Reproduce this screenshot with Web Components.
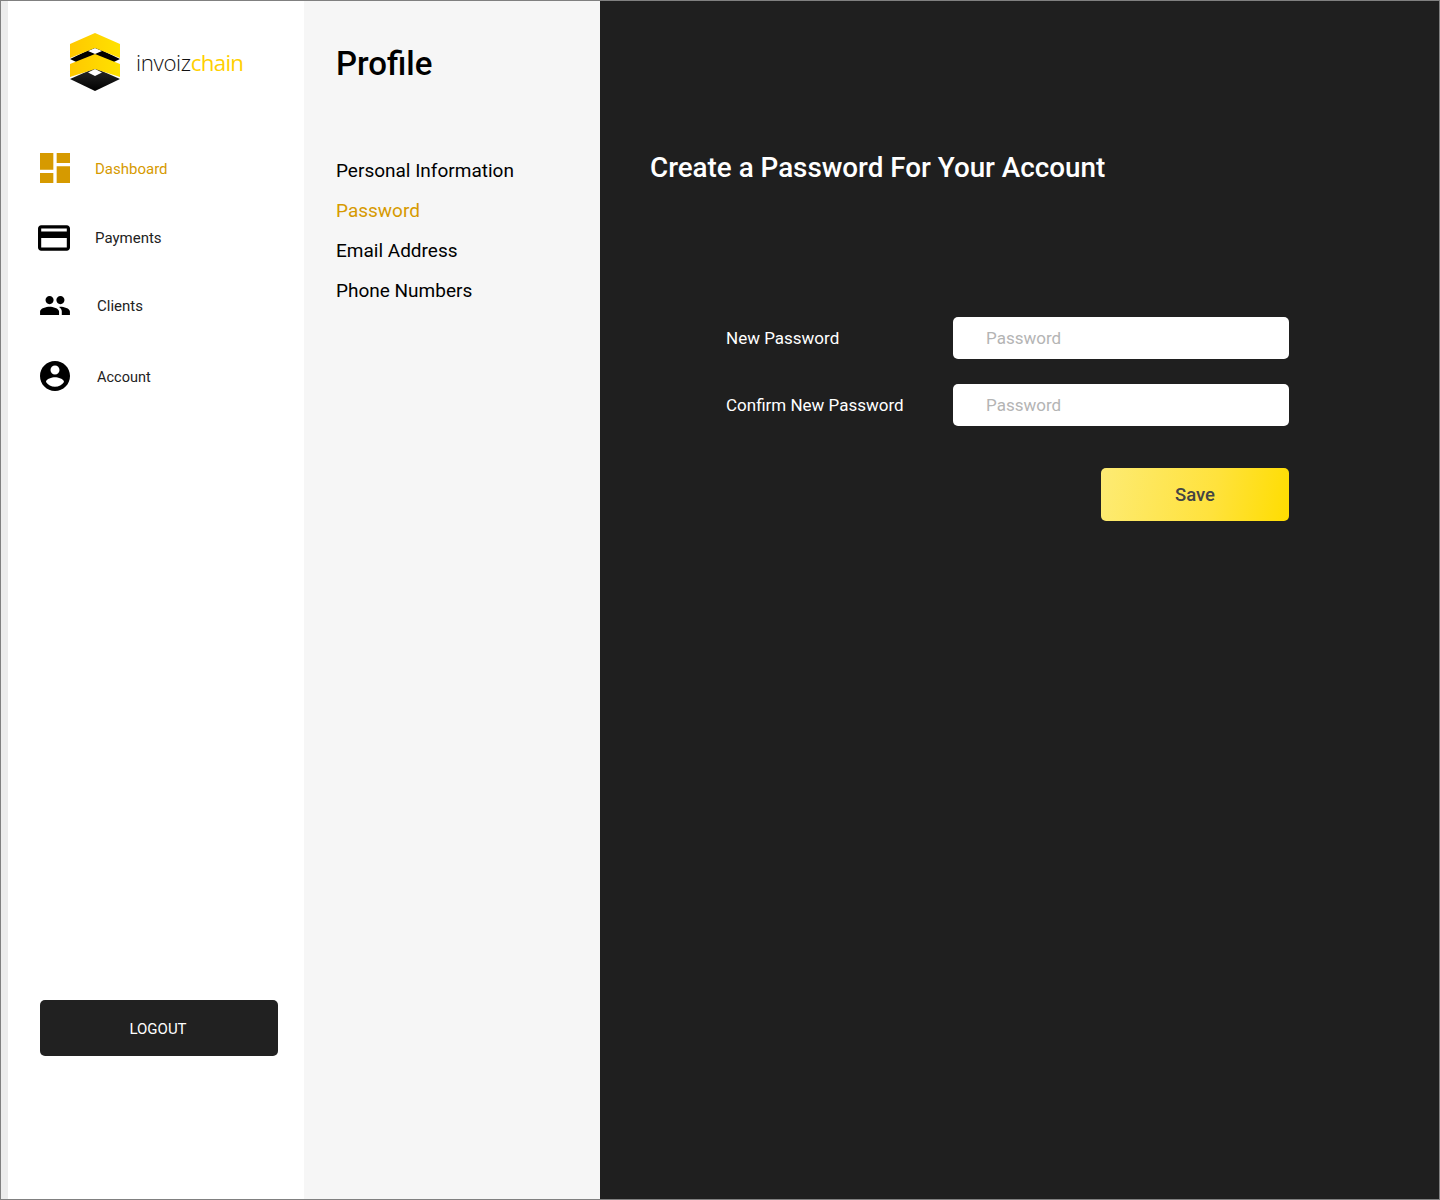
<!DOCTYPE html>
<html lang="en">
<head>
<meta charset="utf-8">
<title>Profile - invoizchain</title>
<style>
  html, body { margin: 0; padding: 0; }
  body { font-family: Roboto, "Liberation Sans", sans-serif; background: #1f1f1f; }
  .frame {
    box-sizing: border-box;
    width: 1440px;
    height: 1200px;
    border: 1px solid #808080;
    background: #ececec;
    display: grid;
    grid-template-columns: 7px 296px 296px 1fr;
    overflow: hidden;
  }
  .frame > :first-child { grid-column: 2; }
</style>
</head>
<body>
<div class="frame">
  <app-sidebar>
    <brand-logo slot="logo"></brand-logo>
    <nav-item active label="Dashboard" icon="dashboard" style="--row:68px;--label-top:2px"></nav-item>
    <nav-item label="Payments" icon="payments" style="--row:72px"></nav-item>
    <nav-item label="Clients" icon="clients" style="--row:63px;--label-gap:27px"></nav-item>
    <nav-item label="Account" icon="account" style="--row:78px;--label-gap:27px;--label-size:14.5px;--label-top:2px"></nav-item>
    <logout-button slot="footer">LOGOUT</logout-button>
  </app-sidebar>
  <profile-menu heading="Profile">
    <menu-link>Personal Information</menu-link>
    <menu-link active>Password</menu-link>
    <menu-link>Email Address</menu-link>
    <menu-link>Phone Numbers</menu-link>
  </profile-menu>
  <password-panel heading="Create a Password For Your Account">
    <form-field label="New Password" placeholder="Password"></form-field>
    <form-field label="Confirm New Password" placeholder="Password"></form-field>
    <save-button slot="actions">Save</save-button>
  </password-panel>
</div>

<script>
const icons = {
  dashboard: { box: '3 3 18 18', w: 30, h: 30, d: 'M3 13h8V3H3v10zm0 8h8v-6H3v6zm10 0h8V11h-8v10zm0-18v6h8V3h-8z' },
  payments: { box: '2 4 20 16', w: 32, h: 26, d: 'M20 4H4c-1.11 0-1.99.89-1.99 2L2 18c0 1.11.89 2 2 2h16c1.11 0 2-.89 2-2V6c0-1.11-.89-2-2-2zm0 14H4v-6h16v6zm0-10H4V6h16v2z' },
  clients: { box: '1 5 22 14', w: 30, h: 19, d: 'M16 11c1.66 0 2.99-1.34 2.99-3S17.66 5 16 5c-1.66 0-3 1.34-3 3s1.34 3 3 3zm-8 0c1.66 0 2.99-1.34 2.99-3S9.66 5 8 5C6.34 5 5 6.34 5 8s1.34 3 3 3zm0 2c-2.33 0-7 1.17-7 3.5V19h14v-2.5c0-2.33-4.67-3.5-7-3.5zm8 0c-.29 0-.62.02-.97.05 1.16.84 1.97 1.97 1.97 3.45V19h6v-2.5c0-2.33-4.67-3.5-7-3.5z' },
  account: { box: '2 2 20 20', w: 30, h: 30, d: 'M12 2C6.48 2 2 6.48 2 12s4.48 10 10 10 10-4.48 10-10S17.52 2 12 2zm0 3c1.66 0 3 1.34 3 3s-1.34 3-3 3-3-1.34-3-3 1.34-3 3-3zm0 14.2c-2.5 0-4.71-1.28-6-3.22.03-1.99 4-3.08 6-3.08 1.99 0 5.97 1.09 6 3.08-1.29 1.94-3.5 3.22-6 3.22z' }
};

class AppSidebar extends HTMLElement {
  constructor() {
    super();
    this.attachShadow({ mode: 'open' });
    this.shadowRoot.innerHTML = `
      <style>
        :host { display: flex; flex-direction: column; background: #fff; min-height: 0; }
        .logo { padding: 32px 0 0 62px; height: 133px; box-sizing: border-box; }
        nav { display: flex; flex-direction: column; }
        .footer { margin-top: auto; padding: 0 26px 143px 32px; }
      </style>
      <div class="logo"><slot name="logo"></slot></div>
      <nav><slot></slot></nav>
      <div class="footer"><slot name="footer"></slot></div>
    `;
  }
}
customElements.define('app-sidebar', AppSidebar);

class BrandLogo extends HTMLElement {
  constructor() {
    super();
    this.attachShadow({ mode: 'open' });
    this.shadowRoot.innerHTML = `
      <style>
        :host { display: flex; align-items: center; gap: 16px; }
        svg { display: block; flex: none; }
        .name { font: 300 22.3px "Open Sans", sans-serif; color: #111; letter-spacing: -0.35px; }
        .name b { font-weight: 400; color: #ffd000; letter-spacing: -0.7px; }
      </style>
      <svg width="50" height="59" viewBox="0 0 50 59">
        <defs>
          <linearGradient id="y" x1="0" x2="1" y1="0" y2="0">
            <stop offset="0" stop-color="#ffc800"/><stop offset="1" stop-color="#ffe200"/>
          </linearGradient>
          <linearGradient id="k" x1="0" x2="0" y1="0" y2="1">
            <stop offset="0" stop-color="#2a2a2a"/><stop offset="1" stop-color="#000"/>
          </linearGradient>
        </defs>
        <polygon points="25,14 50,26 25,38 0,26" fill="#000"/>
        <polygon points="25,15 32,18 25,21 18,18" fill="#fff"/>
        <polygon points="25,35 50,46 25,58 0,46" fill="url(#k)"/>
        <polygon points="25,36 32,39.5 25,43 18,39.5" fill="#fff"/>
        <polygon points="25,0 50,11 50,25 25,15 0,25 0,11" fill="url(#y)"/>
        <polygon points="25,21 50,31 50,44 25,36 0,44 0,31" fill="url(#y)"/>
      </svg>
      <span class="name">invoiz<b>chain</b></span>
    `;
  }
}
customElements.define('brand-logo', BrandLogo);

class NavItem extends HTMLElement {
  constructor() {
    super();
    this.attachShadow({ mode: 'open' });
  }
  connectedCallback() {
    const label = this.getAttribute('label') || '';
    const icon = icons[this.getAttribute('icon')];
    this.shadowRoot.innerHTML = `
      <style>
        :host { display: flex; align-items: center; height: var(--row, 68px); padding-left: 30px; color: #222; }
        :host([active]) { color: #d69a00; }
        .icon { width: 32px; display: flex; justify-content: flex-end; flex: none; }
        svg { display: block; fill: currentColor; }
        :host(:not([active])) svg { fill: #000; }
        .label { margin-left: var(--label-gap, 25px); padding-top: var(--label-top, 0); font: 400 var(--label-size, 15px) Roboto, sans-serif; }
      </style>
      <span class="icon"><svg width="${icon.w}" height="${icon.h}" viewBox="${icon.box}"><path d="${icon.d}"/></svg></span>
      <span class="label">${label}</span>
    `;
  }
}
customElements.define('nav-item', NavItem);

class LogoutButton extends HTMLElement {
  constructor() {
    super();
    this.attachShadow({ mode: 'open' });
    this.shadowRoot.innerHTML = `
      <style>
        :host { display: flex; align-items: center; justify-content: center; height: 56px; box-sizing: border-box; padding: 1px 2px 0 0;
          background: #212121; border-radius: 5px; color: #fff; font: 400 15px Roboto, sans-serif; }
      </style>
      <slot></slot>
    `;
  }
}
customElements.define('logout-button', LogoutButton);

class ProfileMenu extends HTMLElement {
  constructor() {
    super();
    this.attachShadow({ mode: 'open' });
  }
  connectedCallback() {
    this.shadowRoot.innerHTML = `
      <style>
        :host { display: block; background: #f6f6f6; padding: 42px 0 0 32px; }
        h1 { margin: 0 0 74px; font: 500 33px/42px Roboto, sans-serif; color: #000; }
        .links { display: flex; flex-direction: column; gap: 16px; }
      </style>
      <h1>${this.getAttribute('heading')}</h1>
      <div class="links"><slot></slot></div>
    `;
  }
}
customElements.define('profile-menu', ProfileMenu);

class MenuLink extends HTMLElement {
  constructor() {
    super();
    this.attachShadow({ mode: 'open' });
    this.shadowRoot.innerHTML = `
      <style>
        :host { display: block; font: 400 19px/24px Roboto, sans-serif; color: #000; }
        :host([active]) { color: #d69a00; }
      </style>
      <slot></slot>
    `;
  }
}
customElements.define('menu-link', MenuLink);

class PasswordPanel extends HTMLElement {
  constructor() {
    super();
    this.attachShadow({ mode: 'open' });
  }
  connectedCallback() {
    this.shadowRoot.innerHTML = `
      <style>
        :host { display: block; background: #1f1f1f; padding: 148px 0 0 50px; }
        h2 { margin: 0 0 130px; font: 500 27.8px/38px Roboto, sans-serif; color: #fff; }
        .form { margin-left: 76px; width: 563px; display: flex; flex-direction: column; gap: 25px; }
        .actions { display: flex; justify-content: flex-end; margin-top: 17px; }
      </style>
      <h2>${this.getAttribute('heading')}</h2>
      <div class="form">
        <slot></slot>
        <div class="actions"><slot name="actions"></slot></div>
      </div>
    `;
  }
}
customElements.define('password-panel', PasswordPanel);

class FormField extends HTMLElement {
  constructor() {
    super();
    this.attachShadow({ mode: 'open' });
  }
  connectedCallback() {
    const label = this.getAttribute('label');
    const placeholder = this.getAttribute('placeholder');
    this.shadowRoot.innerHTML = `
      <style>
        :host { display: grid; grid-template-columns: 227px 336px; align-items: center; }
        label { font: 400 17px Roboto, sans-serif; color: #fff; }
        input { box-sizing: border-box; width: 336px; height: 42px; border: 0; outline: 0; border-radius: 5px;
          padding: 0 0 0 33px; background: #fff; font: 400 17px Roboto, sans-serif; }
        input::placeholder { color: #b4b4b4; opacity: 1; }
      </style>
      <label>${label}</label>
      <input type="password" placeholder="${placeholder}">
    `;
  }
}
customElements.define('form-field', FormField);

class SaveButton extends HTMLElement {
  constructor() {
    super();
    this.attachShadow({ mode: 'open' });
    this.shadowRoot.innerHTML = `
      <style>
        :host { display: flex; align-items: center; justify-content: center; width: 188px; height: 53px; border-radius: 5px;
          background: linear-gradient(100deg, #fdeb74 0%, #ffe23c 60%, #ffdd00 100%);
          color: #444; font: 500 18.5px Roboto, sans-serif; }
      </style>
      <slot></slot>
    `;
  }
}
customElements.define('save-button', SaveButton);
</script>
</body>
</html>
